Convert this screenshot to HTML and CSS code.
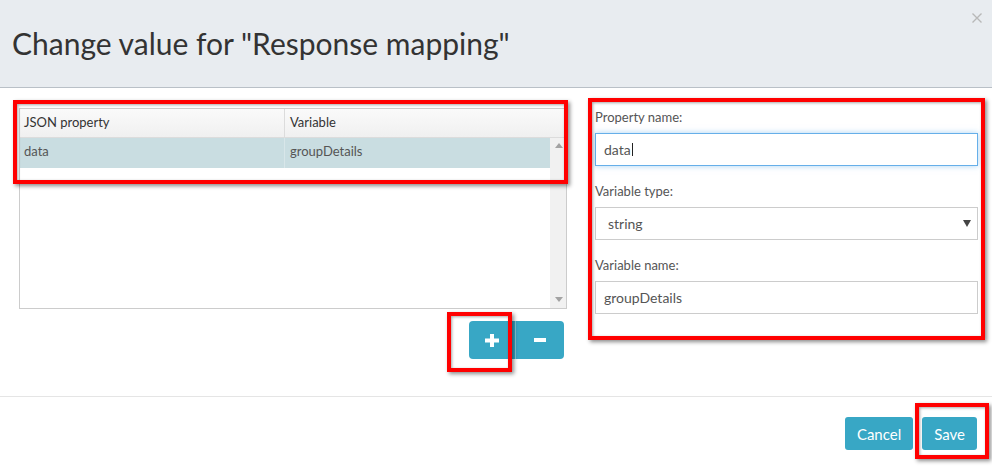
FILE: index.html
```html
<!DOCTYPE html>
<html>
<head>
<meta charset="utf-8">
<link rel="stylesheet" href="styles.css">
</head>
<body>
<div class="modal">
  <header class="modal-header">
    <h1 class="title">Change value for "Response mapping"</h1>
    <svg class="close" width="10" height="10" viewBox="0 0 10 10"><path d="M0.5 0.5 L9.5 9.5 M9.5 0.5 L0.5 9.5" stroke="#b8b8b8" stroke-width="1.4" fill="none"/></svg>
  </header>
  <main class="modal-body">
    <section class="left">
      <div class="grid">
        <div class="grid-head">
          <div class="cell c1">JSON property</div>
          <div class="cell c2">Variable</div>
        </div>
        <div class="grid-body">
          <div class="rows">
            <div class="row selected">
              <div class="cell c1">data</div>
              <div class="cell c2">groupDetails</div>
            </div>
          </div>
          <div class="scrollbar">
            <svg width="8" height="5" viewBox="0 0 8 5"><path d="M0 5 L4 0 L8 5 Z" fill="#a3a3a3"/></svg>
            <svg width="8" height="5" viewBox="0 0 8 5"><path d="M0 0 L4 5 L8 0 Z" fill="#a3a3a3"/></svg>
          </div>
        </div>
      </div>
      <div class="btn-row">
        <div class="btn-group">
          <button class="btn btn-add"><svg width="14" height="13" viewBox="0 0 14 13"><rect x="5" y="0" width="4" height="13" fill="#fff"/><rect x="0" y="4.5" width="14" height="4" fill="#fff"/></svg></button>
          <button class="btn btn-remove"><svg width="12" height="4" viewBox="0 0 12 4"><rect x="0" y="0" width="12" height="4" fill="#fff"/></svg></button>
        </div>
      </div>
    </section>
    <section class="right">
      <div class="form-group">
        <label class="label">Property name:</label>
        <div class="input focused">data<span class="caret"></span></div>
      </div>
      <div class="form-group">
        <label class="label">Variable type:</label>
        <div class="input select"><span>string</span><svg width="8" height="7" viewBox="0 0 8 7"><path d="M0 0 L8 0 L4 7 Z" fill="#444"/></svg></div>
      </div>
      <div class="form-group">
        <label class="label">Variable name:</label>
        <div class="input">groupDetails</div>
      </div>
    </section>
  </main>
  <footer class="modal-footer">
    <button class="btn btn-text">Cancel</button>
    <button class="btn btn-text">Save</button>
  </footer>
</div>
<div class="annot a1"></div>
<div class="annot a2"></div>
<div class="annot a3"></div>
<div class="annot a4"></div>
</body>
</html>
```
FILE: styles.css
```css
html, body {
  margin: 0;
  padding: 0;
  background: #fff;
  font-family: Lato, "Open Sans", sans-serif;
}
.modal {
  width: 992px;
  height: 466px;
  overflow: hidden;
}
.modal-header {
  height: 87px;
  background: #e8ecf0;
  border-bottom: 1px solid #b9c0c7;
  display: flex;
  justify-content: space-between;
  align-items: flex-start;
  padding: 0 10px 0 12px;
}
.title {
  margin: 0;
  padding-top: 25px;
  font-size: 30px;
  line-height: 36px;
  font-weight: normal;
  color: #333;
}
.close {
  margin-top: 13px;
}
.modal-body {
  display: flex;
  gap: 28px;
  padding: 20px 14px 36px 19px;
  height: 252px;
}
.left {
  width: 548px;
}
.grid {
  border: 1px solid #cccccc;
  height: 201px;
  box-sizing: border-box;
  font-size: 13px;
}
.grid-head {
  display: flex;
  height: 28px;
  background: linear-gradient(#fafafa, #f0f0f0);
  border-bottom: 1px solid #dcdcdc;
  color: #333;
}
.grid-head .cell {
  line-height: 26px;
}
.cell {
  padding-left: 4px;
  box-sizing: border-box;
}
.c1 {
  width: 265px;
  border-right: 1px solid #dcdcdc;
}
.c2 {
  flex: 1;
  padding-left: 5px;
}
.grid-body {
  display: flex;
  height: 170px;
}
.rows {
  flex: 1;
}
.row {
  display: flex;
  height: 30px;
  color: #555;
}
.row .cell {
  line-height: 27px;
}
.row.selected {
  background: #c9dde1;
}
.row .c1 {
  border-right-color: #d8e6e9;
}
.scrollbar {
  width: 16px;
  background: #f1f1f1;
  display: flex;
  flex-direction: column;
  justify-content: space-between;
  align-items: center;
  padding: 5px 0 6px 1px;
  box-sizing: border-box;
}
.btn-row {
  display: flex;
  justify-content: flex-end;
  padding-right: 3px;
  margin-top: 12px;
}
.btn-group {
  display: flex;
}
.btn {
  border: none;
  background: #38a7c5;
  color: #fff;
  font-family: Lato, "Open Sans", sans-serif;
  margin: 0;
  padding: 0;
  display: flex;
  align-items: center;
  justify-content: center;
  cursor: pointer;
}
.btn-add {
  width: 46px;
  height: 38px;
  border-radius: 4px 0 0 4px;
}
.btn-remove {
  width: 49px;
  height: 38px;
  border-left: 1px solid #86c7d9;
  border-radius: 0 4px 4px 0;
}
.right {
  width: 383px;
}
.form-group {
  margin-bottom: 16px;
}
.label {
  display: block;
  font-size: 13px;
  line-height: 19px;
  color: #555;
  margin-bottom: 6px;
}
.input {
  height: 33px;
  box-sizing: border-box;
  border: 1px solid #cccccc;
  padding: 0 8px;
  font-size: 14px;
  line-height: 31px;
  color: #555;
  display: flex;
  align-items: center;
}
.input.focused {
  border-color: #66afe9;
  box-shadow: 0 0 6px rgba(102, 175, 233, 0.55);
}
.caret {
  display: inline-block;
  width: 1px;
  height: 13px;
  background: #222;
  margin-left: 1px;
}
.select {
  justify-content: space-between;
  padding: 0 6px 0 12px;
}
.modal-footer {
  border-top: 1px solid #e5e5e5;
  display: flex;
  justify-content: flex-end;
  gap: 9px;
  padding: 20px 15px 0 0;
}
.btn-text {
  height: 33px;
  padding: 0 12px;
  font-size: 15px;
  border-radius: 3px;
}
.annot {
  position: absolute;
  border: 4px solid #ff0000;
  box-sizing: border-box;
  box-shadow: 2px 2px 4px rgba(0, 0, 0, 0.45), inset 1px 1px 3px rgba(0, 0, 0, 0.35);
}
.a1 { left: 13px; top: 100px; width: 555px; height: 84px; }
.a2 { left: 588px; top: 98px; width: 397px; height: 242px; }
.a3 { left: 447px; top: 312px; width: 65px; height: 60px; }
.a4 { left: 915px; top: 403px; width: 74px; height: 56px; }
```
